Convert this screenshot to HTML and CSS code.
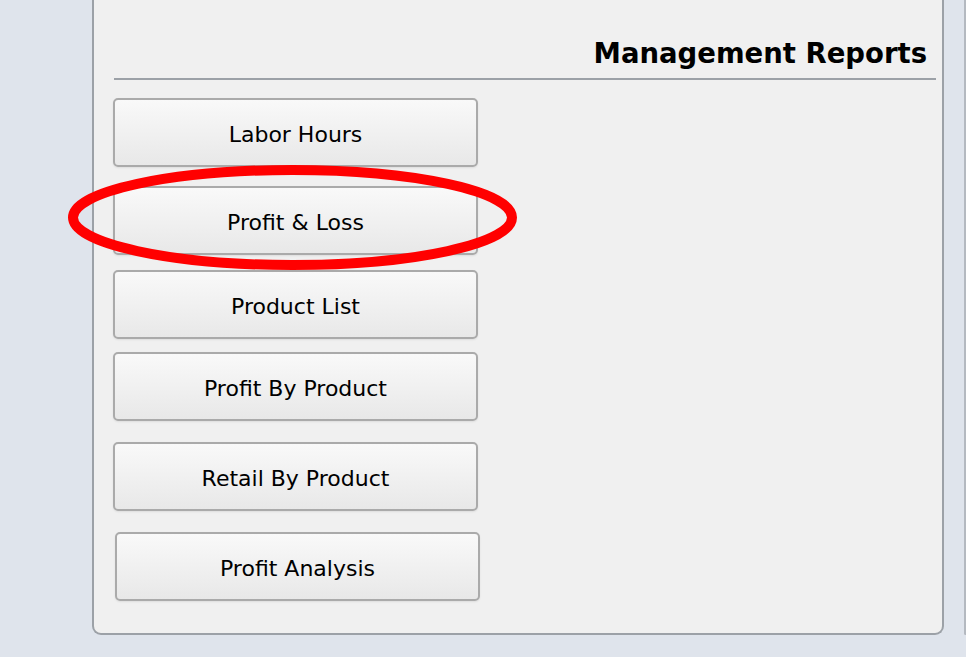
FILE: index.html
```html
<!DOCTYPE html>
<html>
<head>
<meta charset="utf-8">
<link rel="stylesheet" href="styles.css">
</head>
<body>
<div class="page">
  <section class="panel">
    <h2 class="title">Management Reports</h2>
    <div class="rule"></div>
    <div class="buttons">
      <button class="btn b1">Labor Hours</button>
      <button class="btn b2">Profit &amp; Loss</button>
      <button class="btn b3">Product List</button>
      <button class="btn b4">Profit By Product</button>
      <button class="btn b5">Retail By Product</button>
      <button class="btn b6">Profit Analysis</button>
    </div>
  </section>
  <div class="side"></div>
</div>
<svg class="mark" width="460" height="115" viewBox="0 0 460 115">
  <ellipse cx="229.5" cy="57.5" rx="219.5" ry="47.5" fill="none" stroke="#ff0000" stroke-width="10"/>
</svg>
</body>
</html>
```
FILE: styles.css
```css
html, body {
  margin: 0;
  padding: 0;
  background: #dfe4ec;
  font-family: "DejaVu Sans", Verdana, sans-serif;
  overflow: hidden;
}
.page {
  display: flex;
  align-items: flex-start;
  padding-left: 92px;
  gap: 20px;
  height: 657px;
}
.panel {
  box-sizing: border-box;
  width: 852px;
  height: 635px;
  background: #f0f0f0;
  border: 2px solid #9ca1a7;
  border-top: none;
  border-radius: 0 0 9px 9px;
  padding: 37px 6px 0 20px;
}
.title {
  margin: 0;
  font-size: 27.5px;
  line-height: 32px;
  font-weight: bold;
  color: #000;
  text-align: right;
  padding-right: 9px;
}
.rule {
  height: 2px;
  background: #9ca1a7;
  margin-top: 9px;
}
.buttons {
  display: flex;
  flex-direction: column;
  align-items: flex-start;
  padding-top: 18px;
}
.btn {
  box-sizing: border-box;
  width: 365px;
  height: 69px;
  margin-left: -1px;
  border: 2px solid #aaaaaa;
  border-radius: 5px;
  background: linear-gradient(#f9f9f9, #e8e8e8);
  box-shadow: 0 1px 2px rgba(0,0,0,0.08);
  font-family: "DejaVu Sans", Verdana, sans-serif;
  font-size: 22px;
  color: #000;
  padding: 4px 0 0 0;
  display: flex;
  align-items: center;
  justify-content: center;
}
.b2 { margin-top: 19px; }
.b3 { margin-top: 15px; }
.b4 { margin-top: 13px; }
.b5 { margin-top: 21px; }
.b6 { margin-top: 21px; margin-left: 1px; }
.side {
  flex: 1;
  height: 633px;
  background: #dfe4ec;
  border-left: 2px solid #b4b9c0;
  border-bottom: 2px solid #b4b9c0;
  border-radius: 0 0 0 8px;
}
.mark {
  position: absolute;
  left: 63px;
  top: 160px;
}
```
